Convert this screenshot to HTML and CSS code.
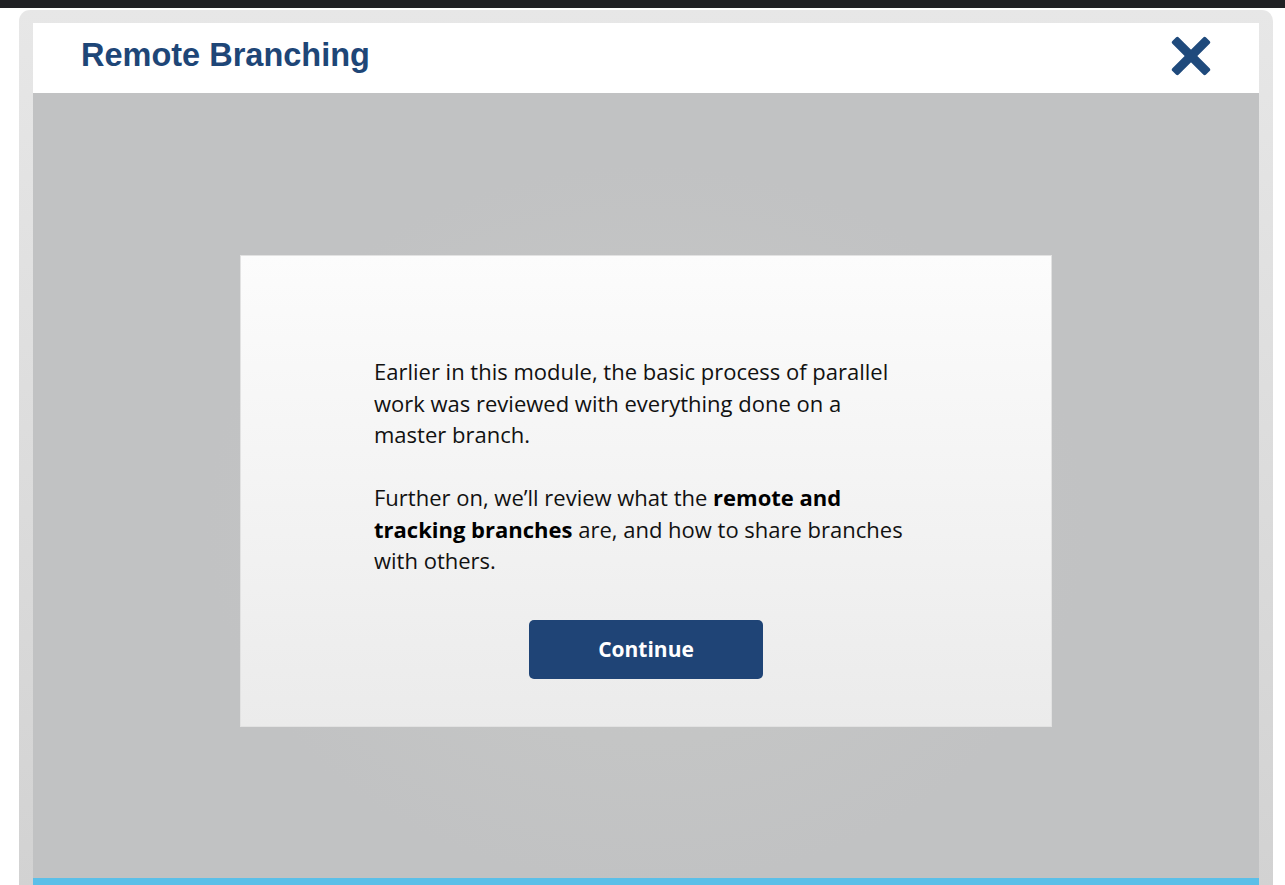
FILE: index.html
```html
<!DOCTYPE html>
<html>
<head>
<meta charset="utf-8">
<link rel="stylesheet" href="styles.css">
</head>
<body>
<div class="topbar"></div>
<div class="frame">
  <header class="header">
    <h1 class="title">Remote Branching</h1>
    <button class="close" aria-label="Close">
      <svg width="40" height="40" viewBox="0 0 40 40">
        <g fill="#1f4a7c">
          <rect x="-3.8" y="15.5" width="47.6" height="9" rx="2" transform="rotate(45 20 20)"/>
          <rect x="-3.8" y="15.5" width="47.6" height="9" rx="2" transform="rotate(-45 20 20)"/>
        </g>
      </svg>
    </button>
  </header>
  <main class="stage">
    <section class="dialog">
      <div class="copy">
        <p>Earlier in this module, the basic process of parallel work was reviewed with everything done on a master branch.</p>
        <p>Further on, we’ll review what the <b>remote and tracking branches</b> are, and how to share branches with others.</p>
      </div>
      <button class="continue">Continue</button>
    </section>
  </main>
  <div class="progress"></div>
</div>
</body>
</html>
```
FILE: styles.css
```css
html, body { margin: 0; padding: 0; background: #ffffff; overflow: hidden; }
.topbar { height: 8px; background: #202124; }
.frame {
  margin: 2px 0 0 19px;
  width: 1254px;
  padding: 13px 14px 0 14px;
  box-sizing: border-box;
  border-radius: 11px 11px 0 0;
  background: linear-gradient(#e7e7e7, #d2d2d2);
}
.header {
  height: 70px;
  box-sizing: border-box;
  background: #ffffff;
  display: flex;
  align-items: center;
  justify-content: space-between;
  padding: 0 48px 5px 48px;
}
.title {
  margin: 0;
  font-family: "Liberation Sans", Arial, sans-serif;
  font-weight: bold;
  font-size: 32.5px;
  color: #1e4677;
}
.close {
  border: 0; background: none; padding: 0; margin: 0;
  width: 40px; height: 40px; display: block;
}
.close svg { display: block; }
.stage {
  height: 785px;
  box-sizing: border-box;
  padding-top: 162px;
  display: flex;
  justify-content: center;
  align-items: flex-start;
  background: radial-gradient(ellipse 440px 360px at 50% 55%, #c6c7c6 0%, #c4c5c5 60%, #c1c2c3 100%);
}
.dialog {
  width: 812px;
  height: 472px;
  box-sizing: border-box;
  border: 1px solid #e2e2e2;
  background: linear-gradient(#fcfcfc, #ebebeb);
  display: flex;
  flex-direction: column;
  align-items: center;
  padding-top: 100px;
}
.copy {
  width: 544px;
  font-family: "Open Sans", sans-serif;
  font-size: 22px;
  line-height: 31.5px;
  color: #111111;
}
.copy p { margin: 0 0 31.5px 0; }
.copy p:last-child { margin-bottom: 0; }
.copy b { font-weight: bold; color: #000; }
.continue {
  margin-top: 43px;
  width: 234px;
  height: 59px;
  border: 0;
  border-radius: 5px;
  background: #1f4476;
  color: #ffffff;
  font-family: "Open Sans", sans-serif;
  font-weight: bold;
  font-size: 21px;
}
.progress { height: 10px; background: #5bbfe8; }
```
